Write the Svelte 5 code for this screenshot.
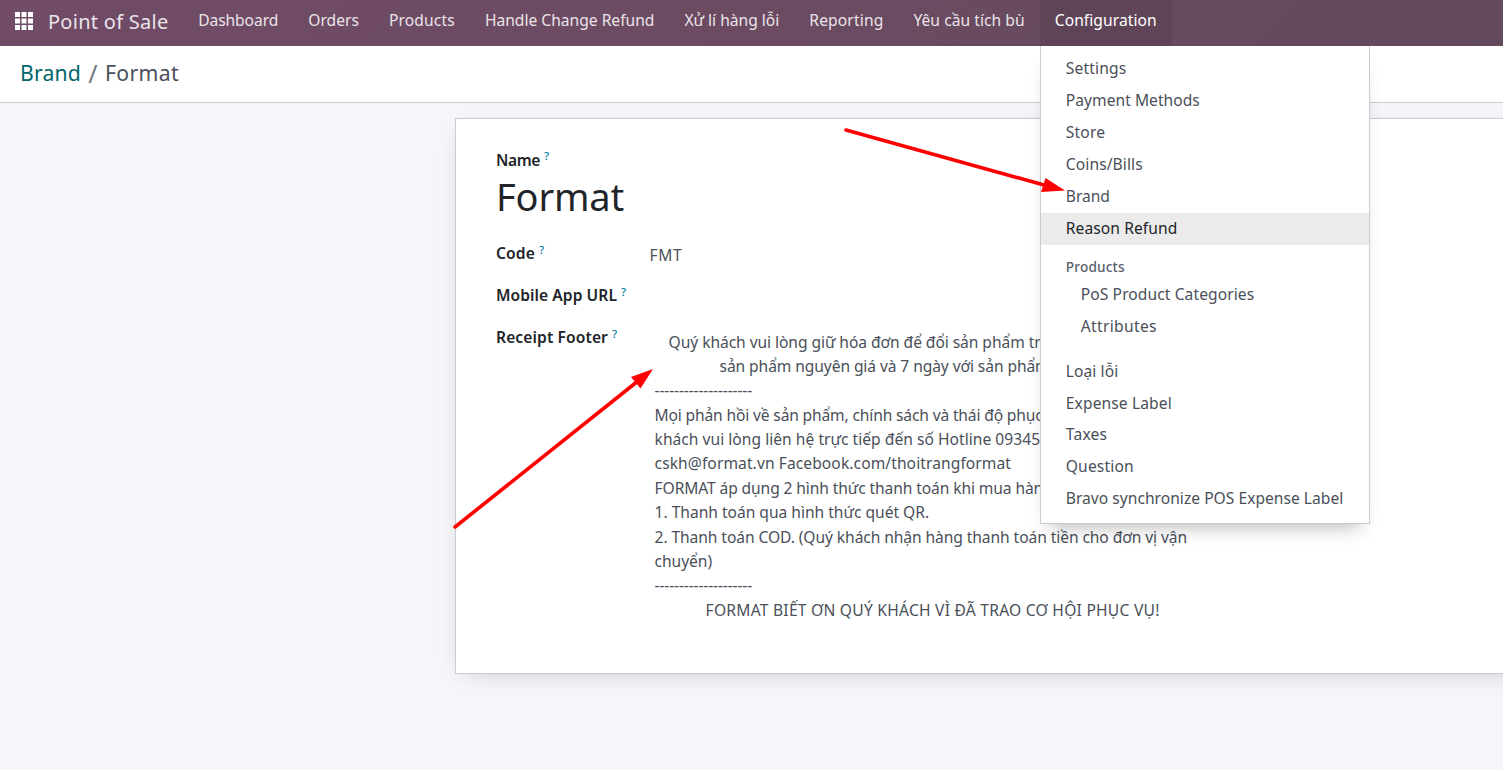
<script>
  const nav = [
    { text: 'Dashboard', width: 80 },
    { text: 'Orders', width: 50.7 },
    { text: 'Products', width: 66 },
    { text: 'Handle Change Refund', width: 169.5 },
    { text: 'Xử lí hàng lỗi', width: 94.9 },
    { text: 'Reporting', width: 74.1 },
    { text: 'Yêu cầu tích bù', width: 111.3 },
    { text: 'Configuration', width: 102, active: true }
  ];

  const menu = [
    { text: 'Settings', width: 60.5 },
    { text: 'Payment Methods', width: 134 },
    { text: 'Store', width: 39.5 },
    { text: 'Coins/Bills', width: 77 },
    { text: 'Brand', width: 44 },
    { text: 'Reason Refund', width: 111.5, kind: 'hover' },
    { text: 'Products', width: 59, kind: 'header' },
    { text: 'PoS Product Categories', width: 173.5, kind: 'child' },
    { text: 'Attributes', width: 76, kind: 'child last' },
    { text: 'Loại lỗi', width: 52.5 },
    { text: 'Expense Label', width: 106 },
    { text: 'Taxes', width: 41.5 },
    { text: 'Question', width: 68 },
    { text: 'Bravo synchronize POS Expense Label', width: 277.5 }
  ];

  const footer = [
    { text: 'Quý khách vui lòng giữ hóa đơn để đổi sản phẩm tr', width: 372, indent: 14 },
    { text: 'sản phẩm nguyên giá và 7 ngày với sản phẩm', width: 330, indent: 65 },
    { text: '--------------------', width: 97.5 },
    { text: 'Mọi phản hồi về sản phẩm, chính sách và thái độ phục', width: 388 },
    { text: 'khách vui lòng liên hệ trực tiếp đến số Hotline 09345', width: 385.5 },
    { text: 'cskh@format.vn Facebook.com/thoitrangformat', width: 356.5 },
    { text: 'FORMAT áp dụng 2 hình thức thanh toán khi mua hàng', width: 398 },
    { text: '1. Thanh toán qua hình thức quét QR.', width: 274.5 },
    { text: '2. Thanh toán COD. (Quý khách nhận hàng thanh toán tiền cho đơn vị vận', width: 532.5 },
    { text: 'chuyển)', width: 57.5 },
    { text: '--------------------', width: 97.5 },
    { text: 'FORMAT BIẾT ƠN QUÝ KHÁCH VÌ ĐÃ TRAO CƠ HỘI PHỤC VỤ!', width: 454, indent: 51 }
  ];

  // Adjusts tracking so that a label takes the given advance width.
  function track(node, width) {
    const natural = node.getBoundingClientRect().width;
    const count = [...node.textContent].length;
    node.style.letterSpacing = `${(width - natural) / count}px`;
  }
</script>

<div class="page">
  <header class="navbar">
    <svg class="apps" width="18" height="18" viewBox="0 0 18 18" aria-hidden="true">
      {#each [0, 6.5, 13] as y}
        {#each [0, 6.5, 13] as x}
          <rect {x} {y} width="5" height="5" fill="#fff" />
        {/each}
      {/each}
    </svg>
    <div class="brand"><span use:track={120.5}>Point of Sale</span></div>
    <nav>
      {#each nav as item}
        <div class="nav-item" class:active={item.active}><span use:track={item.width}>{item.text}</span></div>
      {/each}
    </nav>
  </header>

  <div class="crumbs">
    <span class="link" use:track={61}>Brand</span>
    <span class="slash">/</span>
    <span use:track={74}>Format</span>
  </div>

  <main>
    <section class="sheet">
      <div class="label"><span use:track={44}>Name</span><sup>?</sup></div>
      <h1><span use:track={128}>Format</span></h1>
      <div class="field">
        <div class="label"><span use:track={39}>Code</span><sup>?</sup></div>
        <div class="value"><span use:track={33}>FMT</span></div>
      </div>
      <div class="field">
        <div class="label"><span use:track={121}>Mobile App URL</span><sup>?</sup></div>
      </div>
      <div class="field">
        <div class="label"><span use:track={112}>Receipt Footer</span><sup>?</sup></div>
        <div class="receipt">
          {#each footer as line}
            <p style:padding-left="{line.indent ?? 0}px"><span use:track={line.width}>{line.text}</span></p>
          {/each}
        </div>
      </div>
    </section>
  </main>

  <div class="dropdown">
    {#each menu as item}
      <div class="item {item.kind ?? ''}"><span use:track={item.width}>{item.text}</span></div>
    {/each}
  </div>

  <svg class="arrows" width="1503" height="770" viewBox="0 0 1503 770" aria-hidden="true">
    <g stroke="#f00" stroke-width="3.6" stroke-linecap="round" fill="#f00">
      <path d="M846 130 L1044 185" />
      <path d="M455 527 L638 381" />
      <path stroke="none" d="M1065 190.5 L1045.500 178 L1041 192 Z" />
      <path stroke="none" d="M653 369 L640.5 388.500 L631 377 Z" />
    </g>
  </svg>
</div>

<style>
  :global(body) {
    margin: 0;
    overflow: hidden;
  }
  .page {
    position: relative;
    width: 1503px;
    height: 770px;
    overflow: hidden;
    display: flex;
    flex-direction: column;
    background: #f5f6fa;
    color: #4a4f59;
    font-family: 'Noto Sans', sans-serif;
    font-size: 15.6px;
    line-height: 24.375px;
  }
  span {
    white-space: pre;
  }
  .navbar {
    display: flex;
    flex: none;
    height: 46px;
    background: linear-gradient(135deg, #714b67, #6c4b62 50%, #62495b);
    color: #eae4e8;
  }
  .apps {
    margin: 12px 15px 0;
  }
  .brand {
    width: 135.2px;
    font-size: 20px;
    line-height: 43px;
  }
  nav {
    display: flex;
  }
  .nav-item {
    padding: 0 15px;
    line-height: 40px;
  }
  .nav-item.active {
    background: #5f4458;
    color: #fff;
  }
  .crumbs {
    display: flex;
    flex: none;
    box-sizing: border-box;
    height: 57px;
    padding-left: 20px;
    background: #fff;
    border-bottom: 1px solid #c9ccd2;
    font-size: 21.2px;
    line-height: 54px;
  }
  .link {
    color: #01666b;
  }
  .slash {
    width: 24px;
    text-align: center;
    color: #74787f;
    font-size: 25px;
  }
  main {
    flex: 1;
    padding: 15px 0 0 455px;
  }
  .sheet {
    box-sizing: border-box;
    width: 1120px;
    height: 556px;
    padding: 29px 40px;
    background: #fff;
    border: 1px solid #c9ccd2;
    box-shadow: 0 6px 24px -10px rgba(0, 0, 0, 0.22);
  }
  .label {
    width: 153.4px;
    flex: none;
    color: #212529;
    font-weight: 600;
  }
  sup {
    margin-left: 4px;
    color: #0180a5;
    font-size: 11.5px;
    font-weight: 500;
    line-height: 0;
    vertical-align: 5.6px;
  }
  h1 {
    height: 69px;
    margin: 0;
    color: #212529;
    font-size: 38px;
    font-weight: 400;
    line-height: 49px;
  }
  .field {
    display: flex;
    height: 42px;
  }
  .value {
    padding-top: 2px;
  }
  .receipt {
    padding: 4.2px 0 0 5.2px;
  }
  p {
    margin: 0;
  }
  .dropdown {
    position: absolute;
    top: 46px;
    left: 1040px;
    box-sizing: border-box;
    width: 330px;
    height: 478px;
    padding-top: 7.4px;
    background: #fff;
    border: 1px solid #c9ccd2;
    border-top: 0;
    box-shadow: 0 12px 18px -10px rgba(0, 0, 0, 0.3);
  }
  .item {
    height: 31.875px;
    padding-left: 24.8px;
    line-height: 31.875px;
  }
  .hover {
    background: #ebebeb;
    color: #212529;
  }
  .header {
    height: 26px;
    padding-top: 8.2px;
    color: #5c606d;
    font-size: 13.6px;
    font-weight: 500;
    line-height: 28.4px;
  }
  .child {
    padding-left: 39.8px;
  }
  .last {
    margin-bottom: 13.1px;
  }
  .arrows {
    position: absolute;
    inset: 0;
    pointer-events: none;
  }
</style>
